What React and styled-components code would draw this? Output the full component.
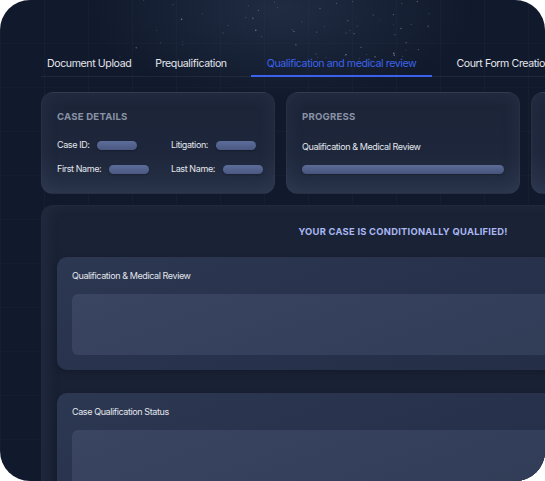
import React from "react";
import styled, { createGlobalStyle } from "styled-components";

const GlobalStyle = createGlobalStyle`
  html, body {
    margin: 0;
    padding: 0;
    background: #ffffff;
  }
  body {
    font-family: Inter, "Liberation Sans", sans-serif;
  }
`;

const Frame = styled.div`
  position: relative;
  width: 545px;
  height: 481px;
  border-radius: 30px;
  overflow: hidden;
  background-color: #111a2c;
  background-image:
    radial-gradient(ellipse 190px 90px at 280px 10px, rgba(60, 76, 108, 0.35), rgba(17, 26, 44, 0) 100%),
    linear-gradient(90deg, rgba(255, 255, 255, 0.018) 1px, transparent 1px),
    linear-gradient(0deg, rgba(255, 255, 255, 0.014) 1px, transparent 1px);
  background-size: 100% 100%, 44px 44px, 44px 44px;
  display: flex;
  flex-direction: column;
  padding: 57px 0 0 41px;
  box-sizing: border-box;
`;

const Stars = styled.svg`
  position: absolute;
  left: 0;
  top: 0;
  pointer-events: none;
`;

const TabBar = styled.div`
  display: flex;
  gap: 24px;
  padding-left: 6px;
  width: 724px;
  border-bottom: 1px solid rgba(255, 255, 255, 0.06);
  flex-shrink: 0;
`;

const Tab = styled.div`
  font-size: 10.6px;
  letter-spacing: -0.4px;
  line-height: 14px;
  white-space: nowrap;
  padding: ${(p) => (p.$active ? "0 16px 4px" : "0 0 4px")};
  color: ${(p) => (p.$active ? "#3d63ea" : "#e3e6ec")};
  border-bottom: 2px solid ${(p) => (p.$active ? "#3a62ec" : "transparent")};
  margin-bottom: -1px;
`;

const CardRow = styled.div`
  display: flex;
  gap: 11px;
  margin-top: 15px;
  flex-shrink: 0;
`;

const Card = styled.div`
  width: 234px;
  height: 102px;
  flex-shrink: 0;
  box-sizing: border-box;
  border-radius: 12px;
  padding: 18px 15px 0;
  background: linear-gradient(180deg, #1c2538 0%, #1d263a 60%, #273147 100%);
  border: 1px solid rgba(255, 255, 255, 0.05);
  box-shadow: inset 0 0 18px rgba(120, 140, 180, 0.11);
`;

const CardTitle = styled.div`
  font-size: 9.6px;
  font-weight: 700;
  letter-spacing: 0.2px;
  line-height: 12px;
  color: #8a93a5;
  text-transform: uppercase;
`;

const FieldGrid = styled.div`
  display: grid;
  grid-template-columns: 114px auto;
  row-gap: 12px;
  margin-top: 16px;
`;

const Field = styled.div`
  display: flex;
  align-items: center;
  gap: 8px;
  font-size: 9px;
  letter-spacing: -0.4px;
  line-height: 12px;
  color: #e3e6ec;
  white-space: nowrap;
`;

const Pill = styled.span`
  display: block;
  width: 40px;
  height: 9px;
  border-radius: 5px;
  background: linear-gradient(180deg, #5d6d99 0%, #4a5882 100%);
  box-shadow: 0 1px 2px rgba(0, 0, 0, 0.25);
`;

const ProgressLabel = styled.div`
  margin-top: 18px;
  font-size: 9px;
  letter-spacing: -0.4px;
  line-height: 12px;
  color: #e3e6ec;
`;

const ProgressTrack = styled.div`
  margin-top: 12px;
  height: 9px;
  border-radius: 5px;
  background: linear-gradient(180deg, #5c6c97 0%, #46547b 100%);
  box-shadow: 0 1px 2px rgba(0, 0, 0, 0.25);
`;

const Panel = styled.div`
  margin-top: 11px;
  width: 724px;
  flex-shrink: 0;
  box-sizing: border-box;
  border-radius: 12px;
  padding: 20px 15px 0;
  background: linear-gradient(180deg, #1a2235 0%, #182033 100%);
  border: 1px solid rgba(255, 255, 255, 0.04);
  box-shadow: inset 6px 0 14px rgba(120, 140, 180, 0.08);
  height: 300px;
`;

const Banner = styled.div`
  text-align: center;
  font-size: 9.4px;
  font-weight: 700;
  letter-spacing: 0.25px;
  line-height: 12px;
  color: #a9b7f2;
`;

const Section = styled.div`
  margin-top: ${(p) => p.$gap}px;
  box-sizing: border-box;
  border-radius: 10px;
  padding: 13px 15px 15px;
  background: linear-gradient(160deg, #2c3752 0%, #27314b 50%, #232c43 100%);
  box-shadow: 0 2px 6px rgba(0, 0, 0, 0.2);
`;

const SectionTitle = styled.div`
  font-size: 9px;
  letter-spacing: -0.4px;
  line-height: 12px;
  color: #e3e6ec;
`;

const SectionBody = styled.div`
  margin-top: 12px;
  height: 61px;
  border-radius: 6px;
  background: linear-gradient(160deg, #3a4661 0%, #34405b 50%, #2f3a54 100%);
`;

const tabs = [
  "Document Upload",
  "Prequalification",
  "Qualification and medical review",
  "Court Form Creation",
];

const makeStars = () => {
  let s = 7;
  const rnd = () => {
    s = (s * 16807) % 2147483647;
    return s / 2147483647;
  };
  const out = [];
  for (let i = 0; i < 70; i++) {
    const x = 120 + rnd() * 310;
    const y = rnd() * 62;
    out.push({ x, y, r: 0.4 + rnd() * 0.4, o: 0.15 + rnd() * 0.35 });
  }
  return out;
};

const stars = makeStars();

export default function App() {
  return (
    <>
      <GlobalStyle />
      <Frame>
        <Stars width="545" height="80">
          {stars.map((d, i) => (
            <circle key={i} cx={d.x} cy={d.y} r={d.r} fill="#c9d3e6" opacity={d.o} />
          ))}
        </Stars>
        <TabBar>
          {tabs.map((t, i) => (
            <Tab key={t} $active={i === 2}>
              {t}
            </Tab>
          ))}
        </TabBar>
        <CardRow>
          <Card>
            <CardTitle>Case Details</CardTitle>
            <FieldGrid>
              <Field>Case ID: <Pill /></Field>
              <Field>Litigation: <Pill /></Field>
              <Field>First Name: <Pill /></Field>
              <Field>Last Name: <Pill /></Field>
            </FieldGrid>
          </Card>
          <Card>
            <CardTitle>Progress</CardTitle>
            <ProgressLabel>Qualification &amp; Medical Review</ProgressLabel>
            <ProgressTrack />
          </Card>
          <Card />
        </CardRow>
        <Panel>
          <Banner>YOUR CASE IS CONDITIONALLY QUALIFIED!</Banner>
          <Section $gap={19}>
            <SectionTitle>Qualification &amp; Medical Review</SectionTitle>
            <SectionBody />
          </Section>
          <Section $gap={23}>
            <SectionTitle>Case Qualification Status</SectionTitle>
            <SectionBody />
          </Section>
        </Panel>
      </Frame>
    </>
  );
}
